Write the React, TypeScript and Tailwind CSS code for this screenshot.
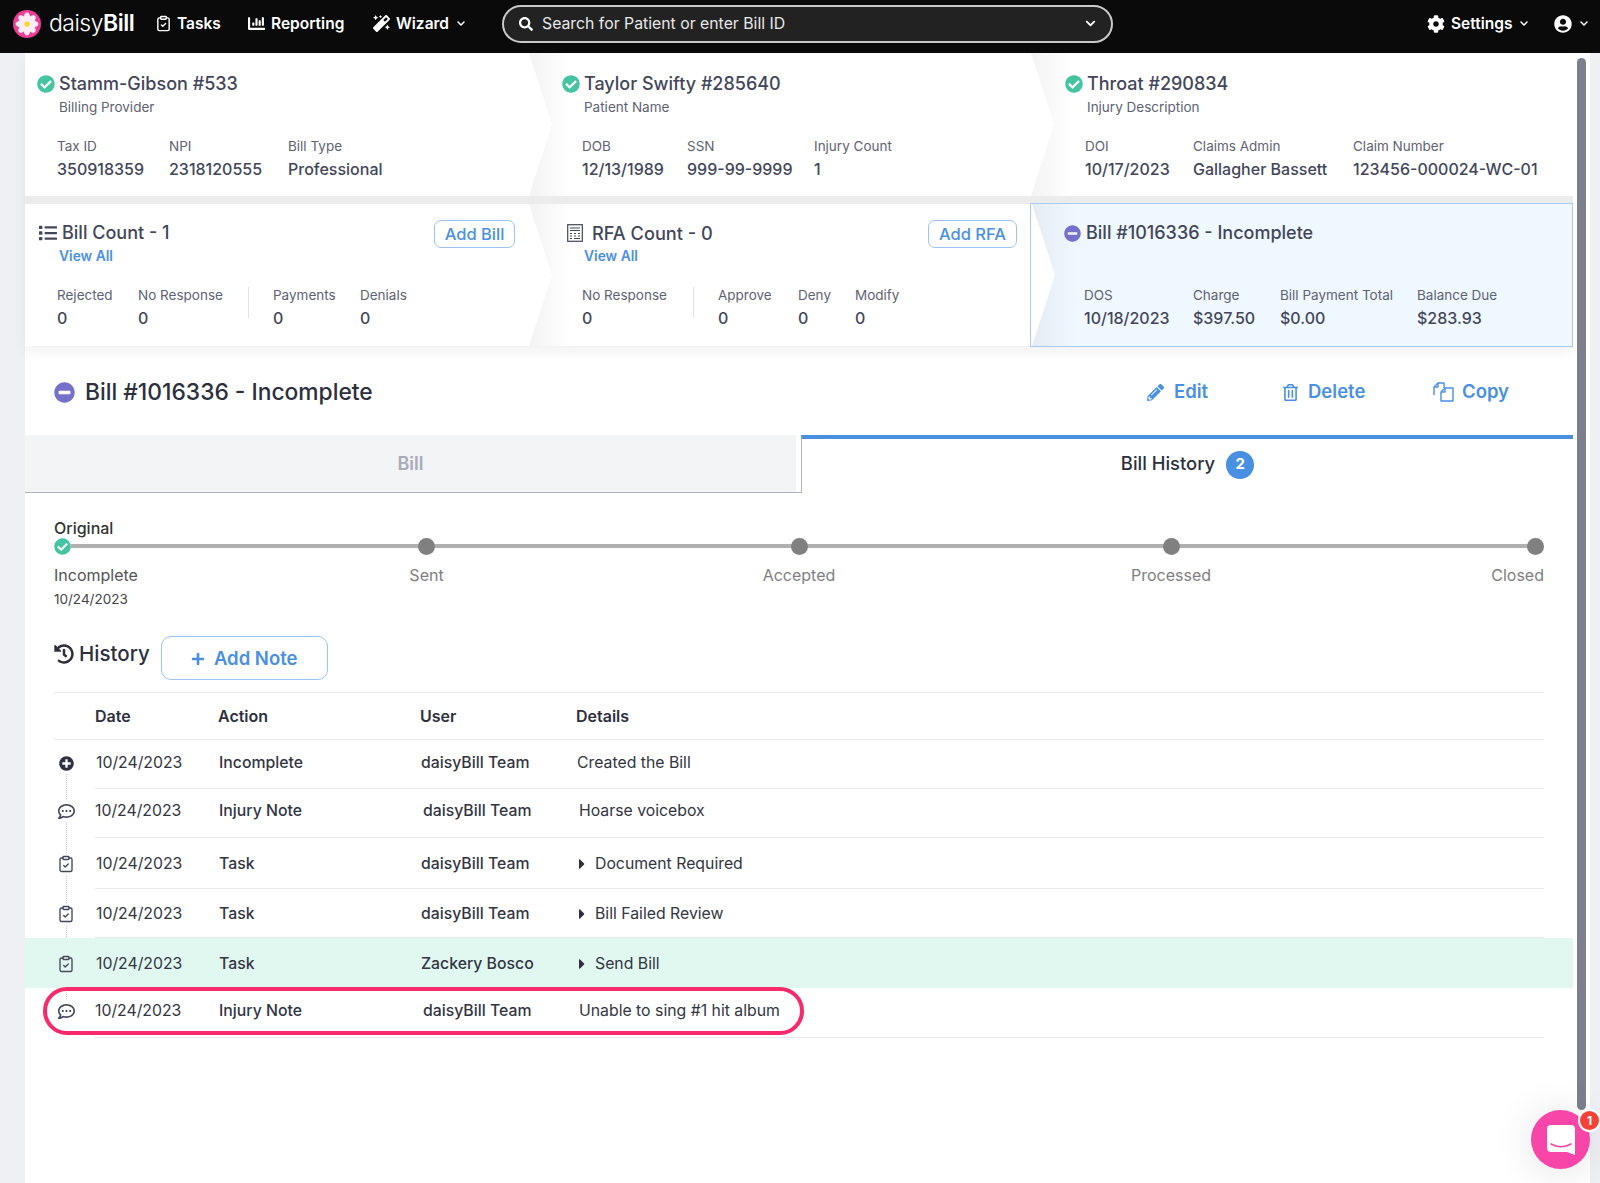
import React from "react";
import {
  FaCaretRight,
  FaChartBar,
  FaCheckCircle,
  FaChevronDown,
  FaCog,
  FaHistory,
  FaList,
  FaMagic,
  FaMinusCircle,
  FaPencilAlt,
  FaPlus,
  FaPlusCircle,
  FaRegCommentDots,
  FaRegTrashAlt,
  FaSearch,
  FaUserCircle,
} from "react-icons/fa";
import { LuClipboardCheck } from "react-icons/lu";

type Stat = { label: string; value: string; width: string };

function Flower() {
  const petals = [0, 45, 90, 135, 180, 225, 270, 315];
  return (
    <svg viewBox="0 0 28 28" className="h-[28px] w-[28px] shrink-0">
      <circle cx="14" cy="14" r="14" fill="#ee3f98" />
      {petals.map((a) => (
        <ellipse key={a} cx="14" cy="7.6" rx="3.2" ry="5" fill="#fdeef6" transform={`rotate(${a} 14 14)`} />
      ))}
      <circle cx="14" cy="14" r="2.6" fill="#f9d71c" />
    </svg>
  );
}

function CalcIcon() {
  return (
    <svg viewBox="0 0 16 18" className="h-[18px] w-[16px] shrink-0" fill="none" stroke="#44475a" strokeWidth="1.2">
      <rect x="0.7" y="0.7" width="14.6" height="16.6" />
      <path d="M3 4h10M3 6.5h10M3 9.5h2M7 9.5h2M11 9.5h2M3 12h2M7 12h2M11 12h2M3 14.5h2M7 14.5h6" />
    </svg>
  );
}

function CopyIcon() {
  return (
    <svg viewBox="0 0 22 20" className="h-[20px] w-[22px] shrink-0" fill="none" stroke="#4a90e2" strokeWidth="1.4" strokeLinejoin="round">
      <path d="M1 13V5l4-4h6v5" />
      <path d="M1 5h4V1" />
      <path d="M8 19V10l4-4h8v13z" />
      <path d="M8 10h4V6" />
    </svg>
  );
}

function ChatIcon() {
  return (
    <svg viewBox="0 0 28 30" className="h-[30px] w-[28px]">
      <path d="M4 0h20a4 4 0 0 1 4 4v26l-8-3H4a4 4 0 0 1-4-4V4a4 4 0 0 1 4-4z" fill="#fff" />
      <path d="M4 19q10 5.5 20 0" fill="none" stroke="#f845a8" strokeWidth="1.6" strokeLinecap="round" />
    </svg>
  );
}

// the arrow between two summary cards, sits on the left edge of the next one
function Chevron({ shade }: { shade: string }) {
  return (
    <div className={`absolute left-0 top-0 h-full w-[44px] bg-gradient-to-r to-transparent ${shade}`}>
      <svg viewBox="0 0 24 100" preserveAspectRatio="none" className="h-full w-[24px]">
        <polygon points="0,0 1,0 24,50 1,100 0,100" fill="#fff" />
      </svg>
    </div>
  );
}

function Stats({ items }: { items: Stat[] }) {
  return (
    <div className="flex">
      {items.map((s) => (
        <div key={s.label} className={`flex flex-col ${s.width}`}>
          <span className="text-[13.5px] leading-[20px] text-[#5f6272]">{s.label}</span>
          <span className="mt-[1px] text-[16px] font-medium leading-[24px] text-[#43465a]">{s.value}</span>
        </div>
      ))}
    </div>
  );
}

function Divided({ left, right, split }: { left: Stat[]; right: Stat[]; split: string }) {
  return (
    <div className="flex">
      <div className={split}>
        <Stats items={left} />
      </div>
      <div className="mr-[24px] mt-[2px] h-[31px] w-px bg-[#e2e3e7]" />
      <Stats items={right} />
    </div>
  );
}

function OutlineBtn({ children, width }: { children: React.ReactNode; width: string }) {
  return (
    <button className={`-mt-[2px] flex h-[28px] items-center justify-center rounded-[7px] border border-[#9cc3f1] text-[16.5px] font-medium text-[#4a90e2] ${width}`}>
      {children}
    </button>
  );
}

function Check() {
  return <FaCheckCircle className="h-[18px] w-[18px] shrink-0 text-[#44c4a1]" />;
}

function Minus({ size }: { size: string }) {
  return <FaMinusCircle className={`shrink-0 text-[#7570c9] ${size}`} />;
}

const rows = [
  { icon: "plus", date: "10/24/2023", action: "Incomplete", user: "daisyBill Team", details: "Created the Bill", h: "h-[49px]", shift: "pb-[3px]" },
  { icon: "note", date: "10/24/2023", action: "Injury Note", user: "daisyBill Team", details: "Hoarse voicebox", h: "h-[49px]", shift: "pb-[5px]" },
  { icon: "task", date: "10/24/2023", action: "Task", user: "daisyBill Team", details: "Document Required", caret: true, h: "h-[51px]", shift: "pt-[1px]" },
  { icon: "task", date: "10/24/2023", action: "Task", user: "daisyBill Team", details: "Bill Failed Review", caret: true, h: "h-[49px]", shift: "pt-[1px]" },
  { icon: "task", date: "10/24/2023", action: "Task", user: "Zackery Bosco", details: "Send Bill", caret: true, h: "h-[50px]", shift: "pt-[1px]", active: true },
  { icon: "note", date: "10/24/2023", action: "Injury Note", user: "daisyBill Team", details: "Unable to sing #1 hit album", h: "h-[50px]", shift: "pb-[4px]", ring: true },
];

function RowIcon({ name }: { name: string }) {
  if (name === "plus") return <FaPlusCircle className="h-[15px] w-[15px] text-[#2f3140]" />;
  if (name === "note") return <FaRegCommentDots className="h-[17px] w-[17px] text-[#44475a]" />;
  return <LuClipboardCheck className="h-[18px] w-[18px] text-[#44475a]" strokeWidth={1.8} />;
}

const steps = [
  { label: "Sent", col: "items-center" },
  { label: "Accepted", col: "items-center" },
  { label: "Processed", col: "items-center" },
  { label: "Closed", col: "items-end" },
];

export default function App() {
  return (
    <div className="relative flex h-[1183px] w-[1600px] flex-col overflow-hidden bg-[#eff0f3] font-['Inter',sans-serif] text-[#2d2f3e]">
      {/* top bar */}
      <header className="flex h-[53px] shrink-0 items-center bg-[#0a0a0a] pb-[6px] text-white">
        <div className="ml-[13px] flex w-[130px] items-center gap-[8px]">
          <Flower />
          <span className="text-[23px] leading-none tracking-[-0.5px]">
            <span className="font-light">daisy</span>
            <span className="font-semibold">Bill</span>
          </span>
        </div>
        <nav className="ml-[12px] flex w-[347px] items-center text-[15.5px] font-semibold">
          <div className="flex w-[93px] items-center gap-[5px]">
            <LuClipboardCheck className="h-[17px] w-[17px]" />
            Tasks
          </div>
          <div className="flex w-[125px] items-center gap-[6px]">
            <FaChartBar className="h-[17px] w-[17px]" />
            Reporting
          </div>
          <div className="flex items-center gap-[6px]">
            <FaMagic className="h-[17px] w-[17px]" />
            Wizard
            <FaChevronDown className="h-[9px] w-[12px]" />
          </div>
        </nav>
        <div className="flex h-[38px] w-[611px] items-center rounded-full border-2 border-[#c9c9c9] bg-[#222222] pl-[15px] pr-[14px]">
          <FaSearch className="h-[14px] w-[14px]" />
          <span className="ml-[9px] flex-1 text-[15.8px] text-[#e8e8e8]">Search for Patient or enter Bill ID</span>
          <FaChevronDown className="h-[11px] w-[13px]" />
        </div>
        <div className="ml-[314px] flex items-center gap-[6px] text-[15.5px] font-semibold">
          <FaCog className="h-[18px] w-[18px]" />
          Settings
          <FaChevronDown className="h-[9px] w-[12px]" />
        </div>
        <div className="ml-[24px] flex items-center gap-[6px]">
          <FaUserCircle className="h-[18px] w-[18px]" />
          <FaChevronDown className="h-[9px] w-[12px]" />
        </div>
      </header>

      <div className="flex min-h-0 flex-1">
        <main className="ml-[25px] flex w-[1548px] flex-col bg-white">
          {/* summary cards */}
          <div className="flex flex-col gap-[8px] bg-[#ececec] shadow-[0_6px_12px_rgba(0,0,0,0.06)]">
            <div className="grid h-[143px] grid-cols-[503px_502px_543px]">
              <section className="bg-white pl-[12px] pt-[20px]">
                <div className="flex items-center gap-[4px]">
                  <Check />
                  <h2 className="text-[18px] font-medium leading-[22px] text-[#43465a]">Stamm-Gibson #533</h2>
                </div>
                <p className="ml-[22px] mt-[2px] text-[13.5px] leading-[20px] text-[#5f6272]">Billing Provider</p>
                <div className="ml-[20px] mt-[19px]">
                  <Stats
                    items={[
                      { label: "Tax ID", value: "350918359", width: "w-[112px]" },
                      { label: "NPI", value: "2318120555", width: "w-[119px]" },
                      { label: "Bill Type", value: "Professional", width: "w-[120px]" },
                    ]}
                  />
                </div>
              </section>
              <section className="relative bg-white pl-[34px] pt-[20px]">
                <Chevron shade="from-[#f3f3f3]" />
                <div className="relative flex items-center gap-[4px]">
                  <Check />
                  <h2 className="text-[18px] font-medium leading-[22px] text-[#43465a]">Taylor Swifty #285640</h2>
                </div>
                <p className="relative ml-[22px] mt-[2px] text-[13.5px] leading-[20px] text-[#5f6272]">Patient Name</p>
                <div className="relative ml-[20px] mt-[19px]">
                  <Stats
                    items={[
                      { label: "DOB", value: "12/13/1989", width: "w-[105px]" },
                      { label: "SSN", value: "999-99-9999", width: "w-[127px]" },
                      { label: "Injury Count", value: "1", width: "w-[100px]" },
                    ]}
                  />
                </div>
              </section>
              <section className="relative bg-white pl-[35px] pt-[20px]">
                <Chevron shade="from-[#f3f3f3]" />
                <div className="relative flex items-center gap-[4px]">
                  <Check />
                  <h2 className="text-[18px] font-medium leading-[22px] text-[#43465a]">Throat #290834</h2>
                </div>
                <p className="relative ml-[22px] mt-[2px] text-[13.5px] leading-[20px] text-[#5f6272]">Injury Description</p>
                <div className="relative ml-[20px] mt-[19px]">
                  <Stats
                    items={[
                      { label: "DOI", value: "10/17/2023", width: "w-[108px]" },
                      { label: "Claims Admin", value: "Gallagher Bassett", width: "w-[160px]" },
                      { label: "Claim Number", value: "123456-000024-WC-01", width: "w-[200px]" },
                    ]}
                  />
                </div>
              </section>
            </div>

            <div className="grid h-[142px] grid-cols-[503px_502px_543px]">
              <section className="bg-white pl-[13px] pt-[18px]">
                <div className="flex items-start justify-between pr-[13px]">
                  <div>
                    <div className="flex items-center gap-[4px]">
                      <FaList className="h-[18px] w-[20px] text-[#44475a]" />
                      <h2 className="text-[18px] font-medium leading-[22px] text-[#43465a]">Bill Count - 1</h2>
                    </div>
                    <a className="ml-[21px] mt-[2px] block text-[13.8px] font-semibold leading-[20px] text-[#4a90e2]">View All</a>
                  </div>
                  <OutlineBtn width="w-[81px]">Add Bill</OutlineBtn>
                </div>
                <div className="ml-[19px] mt-[19px]">
                  <Divided
                    split="w-[191px]"
                    left={[
                      { label: "Rejected", value: "0", width: "w-[81px]" },
                      { label: "No Response", value: "0", width: "w-[110px]" },
                    ]}
                    right={[
                      { label: "Payments", value: "0", width: "w-[87px]" },
                      { label: "Denials", value: "0", width: "w-[60px]" },
                    ]}
                  />
                </div>
              </section>
              <section className="relative bg-white pl-[39px] pt-[18px]">
                <Chevron shade="from-[#f3f3f3]" />
                <div className="relative flex items-start justify-between pr-[13px]">
                  <div>
                    <div className="flex items-center gap-[9px]">
                      <CalcIcon />
                      <h2 className="text-[18.2px] font-medium leading-[22px] text-[#43465a]">RFA Count - 0</h2>
                    </div>
                    <a className="ml-[17px] mt-[2px] block text-[13.8px] font-semibold leading-[20px] text-[#4a90e2]">View All</a>
                  </div>
                  <OutlineBtn width="w-[89px]">Add RFA</OutlineBtn>
                </div>
                <div className="relative ml-[15px] mt-[19px]">
                  <Divided
                    split="w-[111px]"
                    left={[{ label: "No Response", value: "0", width: "w-[111px]" }]}
                    right={[
                      { label: "Approve", value: "0", width: "w-[80px]" },
                      { label: "Deny", value: "0", width: "w-[57px]" },
                      { label: "Modify", value: "0", width: "w-[60px]" },
                    ]}
                  />
                </div>
              </section>
              <section className="relative -my-px border border-[#a9cbf3] bg-[#eff7ff] pl-[33px] pt-[18px]">
                <Chevron shade="from-[#e6ebf1]" />
                <div className="relative flex items-center gap-[5px]">
                  <Minus size="h-[17px] w-[17px]" />
                  <h2 className="text-[18px] font-medium leading-[22px] text-[#43465a]">Bill #1016336 - Incomplete</h2>
                </div>
                <div className="relative ml-[20px] mt-[41px]">
                  <Stats
                    items={[
                      { label: "DOS", value: "10/18/2023", width: "w-[109px]" },
                      { label: "Charge", value: "$397.50", width: "w-[87px]" },
                      { label: "Bill Payment Total", value: "$0.00", width: "w-[137px]" },
                      { label: "Balance Due", value: "$283.93", width: "w-[100px]" },
                    ]}
                  />
                </div>
              </section>
            </div>
          </div>

          {/* bill heading */}
          <div className="flex h-[89px] shrink-0 items-center pl-[29px] pt-[3px]">
            <Minus size="h-[21px] w-[21px]" />
            <h1 className="ml-[10px] text-[22.8px] font-medium text-[#2d2f3e]">Bill #1016336 - Incomplete</h1>
            <div className="ml-auto flex items-center text-[18.5px] font-semibold text-[#4a90e2]">
              <div className="flex w-[135px] items-center gap-[10px]">
                <FaPencilAlt className="h-[17px] w-[17px]" />
                Edit
              </div>
              <div className="flex w-[151px] items-center gap-[9px]">
                <FaRegTrashAlt className="h-[17px] w-[17px]" />
                Delete
              </div>
              <div className="flex w-[140px] items-center gap-[7px]">
                <CopyIcon />
                Copy
              </div>
            </div>
          </div>

          {/* tabs */}
          <div className="flex h-[58px] shrink-0">
            <div className="flex w-[771px] items-center justify-center border-b border-[#b0b3c0] bg-[#f3f4f6] text-[18px] font-semibold text-[#a8abb8]">
              Bill
            </div>
            <div className="w-[5px] border-b border-[#b0b3c0]" />
            <div className="flex flex-1 items-center justify-center gap-[11px] border-l border-t-4 border-l-[#b0b3c0] border-t-[#4a90e2] pb-[5px] text-[18.4px] font-medium">
              Bill History
              <span className="mt-[2px] flex h-[28px] w-[28px] items-center justify-center rounded-full bg-[#4a90e2] text-[15px] font-bold text-white">2</span>
            </div>
          </div>

          {/* bill status track */}
          <div className="ml-[29px] mt-[25px] w-[1490px]">
            <div className="text-[16px] font-medium leading-[20px] text-[#333333]">Original</div>
            <div className="relative grid grid-cols-[186px_373px_372px_372px_187px]">
              <div className="absolute left-[8px] right-[8px] top-[6px] h-[4px] bg-[#b0b0b0]" />
              <div className="relative flex flex-col items-start">
                <span className="flex h-[17px] w-[17px] items-center justify-center rounded-full bg-white">
                  <FaCheckCircle className="h-[17px] w-[17px] text-[#44c4a1]" />
                </span>
                <span className="mt-[9px] text-[16px] leading-[22px] text-[#555555]">Incomplete</span>
                <span className="mt-[3px] text-[13.5px] leading-[20px] text-[#444444]">10/24/2023</span>
              </div>
              {steps.map((s) => (
                <div key={s.label} className={`relative flex flex-col ${s.col}`}>
                  <span className="h-[17px] w-[17px] rounded-full bg-[#808080]" />
                  <span className="mt-[9px] text-[16px] leading-[22px] text-[#808080]">{s.label}</span>
                </div>
              ))}
            </div>
          </div>

          {/* history */}
          <div className="ml-[29px] mt-[28px] flex w-[1490px] items-start">
            <div className="mt-[3px] flex items-center gap-[5px]">
              <FaHistory className="h-[20px] w-[20px] text-[#2d2f3e]" />
              <span className="text-[20.5px] font-medium leading-[28px]">History</span>
            </div>
            <button className="-mt-[1px] ml-[11px] flex h-[44px] w-[167px] items-center justify-center gap-[9px] rounded-[10px] border border-[#9cc3f1] pt-[2px] text-[18.5px] font-semibold text-[#4a90e2]">
              <FaPlus className="h-[14px] w-[14px]" />
              Add Note
            </button>
          </div>

          <div className="relative mt-[12px]">
            <div className="absolute bottom-[27px] left-[41px] top-[70px] border-l border-dotted border-[#c9c9c9]" />
            <div className="mx-[29px] flex h-[48px] items-center border-y border-[#e8e8ea] pl-[41px] text-[16px] font-semibold text-[#2d2f3e]">
              <span className="w-[123px]">Date</span>
              <span className="w-[202px]">Action</span>
              <span className="w-[156px]">User</span>
              <span>Details</span>
            </div>
            {rows.map((r, i) => (
              <div key={i} className={`relative flex ${r.h} ${r.active ? "bg-[#e0f8f0]" : ""}`}>
                <div className={`flex w-[70px] items-center pl-[29px] ${r.shift}`}>
                  <span className={`relative flex h-[22px] w-[24px] items-center justify-center ${r.active ? "bg-[#e0f8f0]" : "bg-white"}`}>
                    <RowIcon name={r.icon} />
                  </span>
                </div>
                <div className={`mr-[29px] flex flex-1 items-center text-[15.8px] text-[#333542] ${r.shift} ${r.active ? "" : "border-b border-[#e8e8ea]"}`}>
                  <span className={`w-[124px] ${r.icon === "note" ? "" : "pl-[1px]"}`}>{r.date}</span>
                  <span className="w-[202px] font-medium">{r.action}</span>
                  <span className={`w-[156px] font-medium ${r.icon === "note" ? "pl-[2px]" : ""}`}>{r.user}</span>
                  <span className={`flex items-center ${r.icon === "note" ? "pl-[2px]" : ""}`}>
                    {r.caret && <FaCaretRight className="mr-[8px] h-[16px] w-[10px] text-[#2d2f3e]" />}
                    {r.details}
                  </span>
                </div>
                {r.ring && <div className="absolute left-[18px] -top-[1px] h-[48px] w-[761px] rounded-[24px] border-4 border-[#f72a6c]" />}
              </div>
            ))}
          </div>
        </main>

        {/* scrollbar */}
        <div className="w-[17px] bg-white pl-[4px] pt-[5px]">
          <div className="h-[1052px] w-[9px] rounded-full bg-[#7d808c]" />
        </div>
      </div>

      {/* chat launcher */}
      <div className="absolute left-[1531px] top-[1110px] flex h-[59px] w-[59px] items-center justify-center rounded-full bg-[#f845a8] shadow-[0_2px_40px_rgba(0,0,0,0.12)]">
        <ChatIcon />
        <span className="absolute -right-[11px] -top-[1px] flex h-[23px] w-[23px] items-center justify-center rounded-full border-2 border-white bg-[#f44336] text-[12px] font-bold text-white">1</span>
      </div>
    </div>
  );
}
